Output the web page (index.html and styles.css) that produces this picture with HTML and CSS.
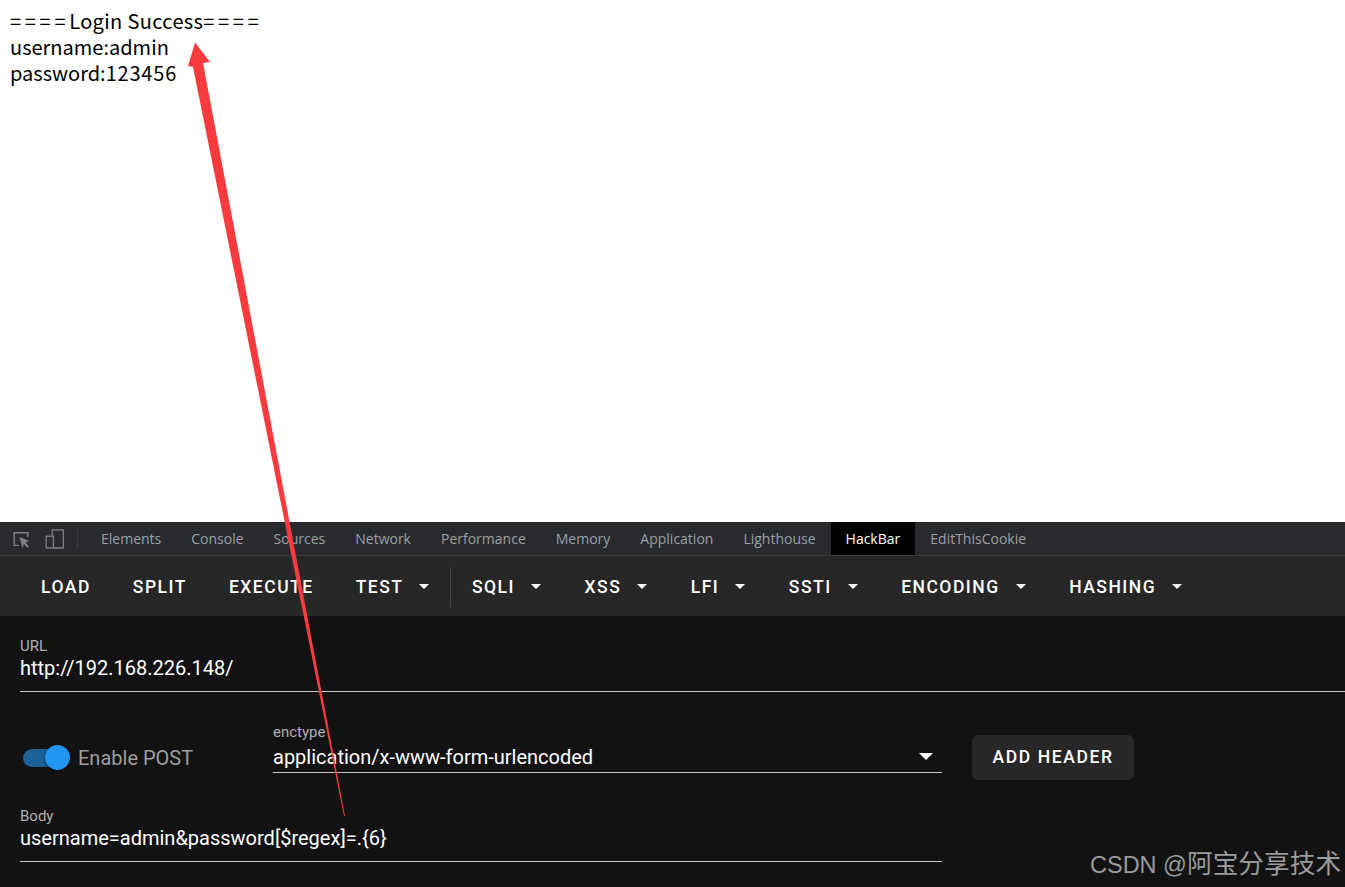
FILE: index.html
```html
<!DOCTYPE html>
<html lang="en">
<head>
<meta charset="utf-8">
<title>HackBar</title>
<link rel="stylesheet" href="styles.css">
</head>
<body>
<main class="page">
  <div class="result">
    <div><span class="eq">====</span><span class="title">Login Success</span><span class="eq">====</span></div>
    <div>username:admin</div>
    <div>password:<span class="digits">123456</span></div>
  </div>
  <section class="devtools">
    <nav class="tabs">
      <span class="tool-icon">
        <svg width="20" height="20" viewBox="0 0 20 20" fill="none"><path d="M7 16.400H2.200V3.700H15.800V8" stroke="#808183" stroke-width="1.400"/><path d="M7.500 8l10 4-4 1.500 3.500 4-1.500 1.500-3.500-4-1.500 4z" fill="#808183"/></svg>
      </span>
      <span class="tool-icon">
        <svg width="20" height="20" viewBox="0 0 20 20" fill="none"><path d="M7.200 7V.8h11.100v18.200H8.500" stroke="#808183" stroke-width="1.300"/><rect x="1.200" y="7.200" width="7.200" height="11.800" stroke="#808183" stroke-width="1.300"/></svg>
      </span>
      <span class="tab-sep"></span>
      <span class="tab">Elements</span>
      <span class="tab">Console</span>
      <span class="tab">Sources</span>
      <span class="tab">Network</span>
      <span class="tab">Performance</span>
      <span class="tab">Memory</span>
      <span class="tab">Application</span>
      <span class="tab">Lighthouse</span>
      <span class="tab active">HackBar</span>
      <span class="tab">EditThisCookie</span>
    </nav>
    <div class="toolbar">
      <span class="tb-btn">LOAD</span>
      <span class="tb-btn">SPLIT</span>
      <span class="tb-btn">EXECUTE</span>
      <span class="tb-btn menu">TEST<i class="caret"></i></span>
      <span class="tb-sep"></span>
      <span class="tb-btn menu">SQLI<i class="caret"></i></span>
      <span class="tb-btn menu">XSS<i class="caret"></i></span>
      <span class="tb-btn menu">LFI<i class="caret"></i></span>
      <span class="tb-btn menu">SSTI<i class="caret"></i></span>
      <span class="tb-btn menu">ENCODING<i class="caret"></i></span>
      <span class="tb-btn menu">HASHING<i class="caret"></i></span>
    </div>
    <div class="panel">
      <div class="field url">
        <label class="lbl">URL</label>
        <div class="val">http://192.168.226.148/</div>
      </div>
      <div class="post-row">
        <div class="switch">
          <span class="track"></span><span class="thumb"></span>
        </div>
        <span class="post-label">Enable POST</span>
        <div class="field enctype">
          <label class="lbl">enctype</label>
          <div class="val select">application/x-www-form-urlencoded<i class="caret big"></i></div>
        </div>
        <span class="add-header">ADD HEADER</span>
      </div>
      <div class="field body-field">
        <label class="lbl">Body</label>
        <div class="val">username=admin&amp;password[$regex]=.{6}</div>
      </div>
    </div>
  </section>
</main>
<svg class="arrow" width="1345" height="887" viewBox="0 0 1345 887"><path d="M195 42.500L210 62 203 63 345 816 344 816 193 67 188 66z" fill="#fb3a3e"/></svg>
<span class="watermark">CSDN @<span class="wm-cjk">阿宝分享技术</span></span>
</body>
</html>
```

FILE: styles.css
```css
* { box-sizing: border-box; }
html, body { margin: 0; padding: 0; height: 887px; overflow: hidden; background: #fff; }
.page { display: flex; flex-direction: column; height: 887px; position: relative; }
.result {
  height: 522px;
  padding: 8px 0 0 10px;
  font: 20px/26px "Noto Sans CJK SC", "Noto Sans", sans-serif;
  color: #000;
}
.eq { letter-spacing: 3.700px; }
.title { letter-spacing: .35px; }
.digits { letter-spacing: .8px; }
.devtools { flex: 1; display: flex; flex-direction: column; font-family: Roboto, sans-serif; background: #121212; }
.tabs {
  height: 34px;
  display: flex;
  align-items: center;
  background: #292a2d;
  border-bottom: 1px solid #3c3d40;
  padding-left: 12px;
  font: 14px "Open Sans", "Noto Sans", sans-serif;
  color: #9aa0a6;
}
.tool-icon { width: 20px; height: 20px; margin-right: 13px; display: flex; }
.tab-sep { width: 1px; height: 20px; background: #3c3d40; margin: 0 8px 0 -1px; }
.tab { padding: 0 15px; height: 33px; line-height: 33px; white-space: nowrap; }
.tab.active { background: #000; color: #fff; }
.toolbar {
  height: 60px;
  display: flex;
  align-items: center;
  background: #272727;
  padding: 1px 0 0 20px;
}
.tb-btn {
  display: flex;
  align-items: center;
  padding: 0 21px;
  font: 500 17.500px Roboto, sans-serif;
  letter-spacing: 1.500px;
  color: #fff;
  white-space: nowrap;
}
.tb-btn.menu { padding-right: 22.500px; }
.caret {
  display: inline-block;
  width: 0;
  height: 0;
  margin-left: 16px;
  border-left: 5px solid transparent;
  border-right: 5px solid transparent;
  border-top: 5px solid #fff;
}
.tb-sep { width: 1px; height: 40px; background: #444; margin-left: -2px; }
.panel { flex: 1; padding: 21px 0 0 20px; background: #121212; color: #fff; }
.field { display: flex; flex-direction: column; }
.lbl { font: 15px/20px Roboto, sans-serif; color: #b0b0b0; }
.val {
  font: 20px/24px Roboto, sans-serif;
  color: #fff;
  border-bottom: 1px solid #c4c4c4;
  height: 36px;
}
.url .lbl { height: 19px; line-height: 19px; }
.post-row { display: flex; align-items: center; margin-top: 42px; height: 48px; }
.switch { width: 48px; height: 26px; position: relative; margin: 0 7px 0 3px; }
.track { position: absolute; left: 0; top: 4px; width: 44px; height: 18px; border-radius: 9px; background: #1c6198; }
.thumb { position: absolute; left: 22px; top: 0; width: 25px; height: 25px; border-radius: 50%; background: #2196f3; box-shadow: 0 1px 3px rgba(0,0,0,.5); }
.post-label { font: 20px Roboto, sans-serif; color: #9e9e9e; width: 195px; }
.enctype { width: 669px; margin-bottom: 21px; }
.enctype .lbl { height: 19px; line-height: 19px; }
.select { display: flex; justify-content: space-between; height: 31px; line-height: 30px; }
.caret.big { margin: 11px 9px 0 0; border-left-width: 7px; border-right-width: 7px; border-top-width: 7px; }
.add-header {
  margin: 0 0 2px 30px;
  width: 162px;
  height: 45px;
  display: flex;
  align-items: center;
  justify-content: center;
  background: #272727;
  border-radius: 6px;
  font: 500 17.500px Roboto, sans-serif;
  letter-spacing: 1.600px;
  color: #fff;
}
.body-field { width: 922px; margin-top: 25px; }
.body-field .lbl { height: 19px; line-height: 19px; }
.arrow { position: absolute; left: 0; top: 0; pointer-events: none; }
.watermark {
  position: absolute;
  left: 1090px;
  top: 843px;
  font: 23.500px "Liberation Sans", "Noto Sans CJK SC", sans-serif;
  color: #9a9a9a;
  white-space: nowrap;
}
.wm-cjk { font-size: 25.700px; }
```
